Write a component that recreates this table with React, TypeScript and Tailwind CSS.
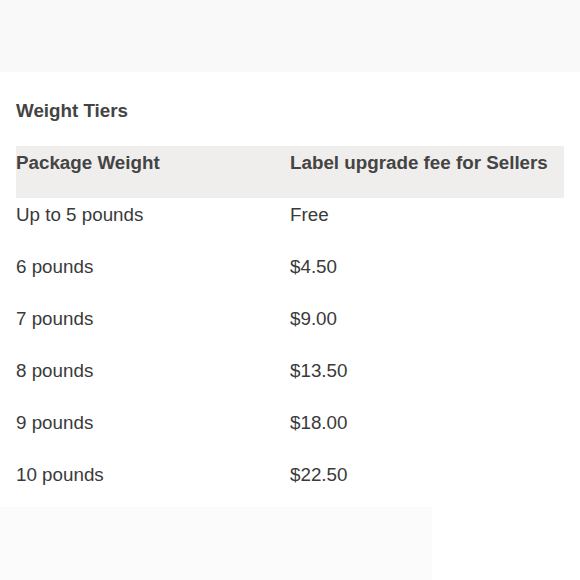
const rows: [string, string][] = [
  ["Up to 5 pounds", "Free"],
  ["6 pounds", "$4.50"],
  ["7 pounds", "$9.00"],
  ["8 pounds", "$13.50"],
  ["9 pounds", "$18.00"],
  ["10 pounds", "$22.50"],
];

export default function App() {
  return (
    <div className="flex h-[580px] w-[580px] flex-col bg-white font-['Liberation_Sans',Arial,sans-serif]">
      <div className="h-[72px] bg-[#f9f9f9]" />
      <div className="px-4">
        <h2 className="mt-[27px] text-[18.8px] leading-[24px] font-bold text-[#444]">Weight Tiers</h2>
        <div className="mt-[23px] w-[548px]">
          <div className="flex h-[52px] bg-[#efeeed] pt-[5px] text-[18.8px] leading-[24px] font-bold text-[#444]">
            <div className="w-[274px]">Package Weight</div>
            <div>Label upgrade fee for Sellers</div>
          </div>
          {rows.map(([w, fee], i) => (
            <div
              key={w}
              className={`flex pt-[5px] text-[18.8px] leading-[24px] text-[#3a3a3a] ${i === rows.length - 1 ? "h-[49px]" : "h-[52px]"}`}
            >
              <div className="w-[274px]">{w}</div>
              <div>{fee}</div>
            </div>
          ))}
        </div>
      </div>
      <div className="h-[73px] w-[432px] bg-[#fbfbfb]" />
    </div>
  );
}
